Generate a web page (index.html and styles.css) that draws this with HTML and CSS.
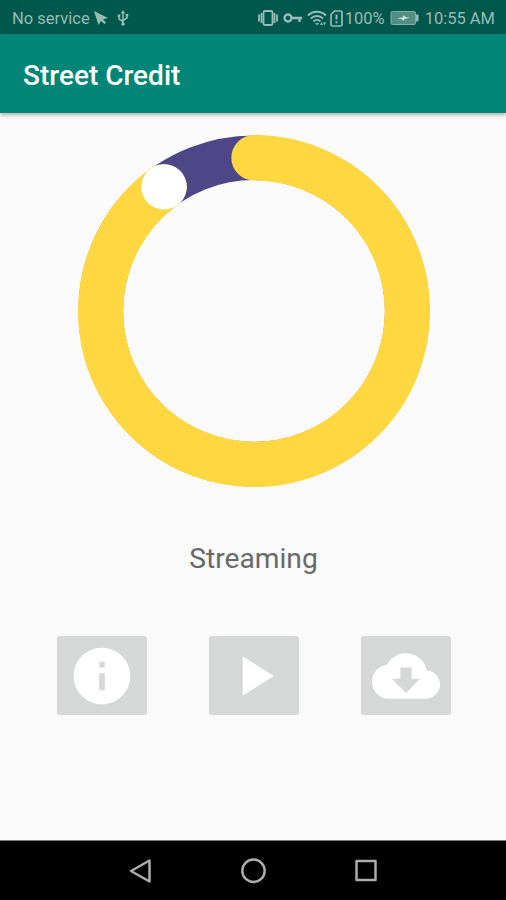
FILE: index.html
```html
<!DOCTYPE html>
<html lang="en">

  <head>

    <meta charset="utf-8">
    <meta name="viewport" content="width=device-width, initial-scale=1.0">

    <title>Street Credit</title>

    <link rel="stylesheet" href="styles.css">

  </head>
  <body>

    <div class="main">

      <div class="status">
        <div class="status-text">No service</div>
        <svg class="icon-pointer" width="16" height="16" viewBox="0 0 16 16"><path d="M1 1l14 7-5 1.5 3 3-1.500 1.500-3.500-3-2.500 4z"/></svg>
        <svg class="icon-usb" width="12" height="18" viewBox="0 0 12 18" fill="none" stroke-width="1.500">
          <path d="M6 3v11M2 7v3l4 2.500M10 6v3l-4 2.500"/>
          <path class="solid" d="M6 1l2.200 3.500H3.800zM.7 5.500h2.600v2.500H.7zM8.700 5h2.600v2.500H8.700z"/>
          <circle class="solid" cx="6" cy="15" r="1.800"/>
        </svg>
        <div class="status-spacer"></div>
        <svg class="icon-vibrate" width="20" height="18" viewBox="0 0 20 18" fill="none" stroke-width="1.800">
          <rect x="5.500" y="2" width="9" height="14" rx="1.500"/>
          <path d="M3.500 4v10M1 5.500v7M16.500 4v10M19 5.500v7"/>
        </svg>
        <svg class="icon-key" width="20" height="12" viewBox="0 0 20 12" fill="none" stroke-width="2.300">
          <circle cx="5" cy="6" r="3.500"/>
          <path d="M8.500 6H19M16.500 6v4"/>
        </svg>
        <svg class="icon-wifi" width="20" height="18" viewBox="0 0 20 18" fill="none" stroke-width="2">
          <path d="M1 6.500c5-5 13-5 18 0M3.800 9.600c3.500-3.500 8.900-3.500 12.400 0M6.500 12.500c2-2 5-2 7 0"/>
          <path class="solid" d="M8 14h4l-2 2.500zM13 16l1.500-3 1.500 3zM16 13.500h3l-1.500 3z"/>
        </svg>
        <svg class="icon-sim" width="13" height="17" viewBox="0 0 13 17" fill="none" stroke-width="1.700">
          <path d="M4.500 1h6q1.500 0 1.500 1.500v12q0 1.500-1.500 1.500h-8Q1 16 1 14.500V4.500z"/>
          <path d="M6.500 4.500v5M6.500 11.300v2" stroke-width="2"/>
        </svg>
        <div class="status-text">100%</div>
        <svg class="icon-battery" width="29" height="16" viewBox="0 0 29 16">
          <rect class="battery-level" x="1" y="1.500" width="24.500" height="13" rx="1.500"/>
          <path d="M26 4.500h1.500q1 0 1 1v5q0 1-1 1H26z"/>
          <path class="bolt" d="M7 8.300l6-1 .5-2.300 2.500 2.200 4 .5-5.500 1.300-1 2-2-2z"/>
        </svg>
        <div class="status-text">10:55 AM</div>
      </div>

      <div class="header">Street Credit</div>

      <div class="content">
        <svg class="progress" width="352" height="352" viewBox="0 0 352 352" fill="none">
          <circle class="progress-track" cx="176" cy="176" r="153.300"/>
          <path class="progress-bar" d="M176 22.700A153.300 153.300 0 1 1 86 51.900"/>
          <circle class="progress-thumb" cx="86" cy="51.900" r="22.700"/>
        </svg>

        <div class="label">Streaming</div>

        <div class="controls">
          <button class="control" aria-label="Info">
            <svg viewBox="0 0 24 24"><path d="M12 2C6.480 2 2 6.480 2 12s4.480 10 10 10 10-4.480 10-10S17.520 2 12 2zm1 15h-2v-6h2v6zm0-8h-2V7h2v2z"/></svg>
          </button>
          <button class="control" aria-label="Play">
            <svg viewBox="0 0 24 24"><path d="M8 5v14l11-7z"/></svg>
          </button>
          <button class="control" aria-label="Download">
            <svg viewBox="0 0 24 24"><path d="M19.350 10.040C18.670 6.590 15.640 4 12 4 9.110 4 6.600 5.640 5.350 8.040 2.340 8.360 0 10.910 0 14c0 3.310 2.690 6 6 6h13c2.760 0 5-2.240 5-5 0-2.640-2.050-4.780-4.650-4.960zM17 13l-5 5-5-5h3V9h4v4h3z"/></svg>
          </button>
        </div>
      </div>

      <div class="nav">
        <svg width="26" height="26" viewBox="0 0 26 26"><path d="M21.500 2.500v21L3 13z"/></svg>
        <svg width="26" height="26" viewBox="0 0 26 26"><circle cx="13.500" cy="12.700" r="11.200"/></svg>
        <svg width="26" height="26" viewBox="0 0 26 26"><rect x="3.500" y="3" width="19" height="19"/></svg>
      </div>

    </div>

  </body>
</html>
```
FILE: styles.css
```css
* {
  box-sizing: border-box;
  font-family: Roboto, sans-serif;
}

body {
  margin: 0px;
  padding: 0px;
  background-color: rgb(250, 250, 250);
}

.main {
  display: flex;
  flex-direction: column;
  height: 900px;
}

.status {
  display: flex;
  align-items: center;
  height: 34px;
  padding: 2px 11px 0px 12px;
  background-color: rgb(0, 87, 75);
  color: rgb(153, 188, 183);
}

.status svg {
  flex: none;
  fill: rgb(153, 188, 183);
}

.status svg[fill="none"] {
  fill: none;
  stroke: rgb(153, 188, 183);
}

.status .solid {
  fill: rgb(153, 188, 183);
  stroke: none;
}

.status-text {
  padding-top: 1px;
  font-size: 16.5px;
  line-height: 20px;
  white-space: nowrap;
}

.status-spacer {
  flex-grow: 1;
}

.icon-pointer {
  margin-left: 3px;
}

.icon-usb {
  margin-left: 8px;
}

.icon-key {
  margin-left: 5px;
}

.icon-wifi {
  margin-left: 4px;
}

.icon-sim {
  margin-left: 3px;
  margin-right: 2px;
}

.icon-battery {
  margin-left: 5px;
  margin-right: 6px;
}

.battery-level {
  fill: rgb(84, 141, 132);
  stroke: rgb(132, 174, 168);
}

.bolt {
  fill: rgb(205, 225, 221);
}

.header {
  height: 79px;
  padding-left: 23px;
  background-color: rgb(0, 133, 119);
  box-shadow: 0px 2px 4px rgba(0, 0, 0, 0.3);
  color: rgb(255, 255, 255);
  font-size: 28px;
  font-weight: 500;
  line-height: 83px;
}

.content {
  display: flex;
  flex-direction: column;
  flex-grow: 1;
  align-items: center;
  padding-top: 22px;
  padding-left: 1px;
}

.progress-track {
  stroke: rgb(77, 71, 136);
  stroke-width: 44.5px;
}

.progress-bar {
  stroke: rgb(255, 215, 64);
  stroke-width: 45.400px;
  stroke-linecap: round;
}

.progress-thumb {
  fill: rgb(255, 255, 255);
}

.label {
  margin-top: 52px;
  color: rgb(105, 105, 105);
  font-size: 28.2px;
  line-height: 40px;
}

.controls {
  display: flex;
  gap: 62px;
  margin-top: 57px;
}

.control {
  display: flex;
  width: 90px;
  height: 79px;
  padding: 0px;
  justify-content: center;
  align-items: center;
  border: none;
  border-radius: 3px;
  background-color: rgb(214, 215, 215);
}

.control svg {
  width: 68px;
  height: 68px;
  fill: rgb(255, 255, 255);
}

.nav {
  display: flex;
  height: 60px;
  justify-content: center;
  align-items: center;
  gap: 86.5px;
  border-top: 1px solid rgb(125, 125, 125);
  background-color: rgb(0, 0, 0);
}

.nav svg {
  fill: none;
  stroke: rgb(172, 172, 172);
  stroke-width: 2.500px;
  stroke-linejoin: round;
}
```
